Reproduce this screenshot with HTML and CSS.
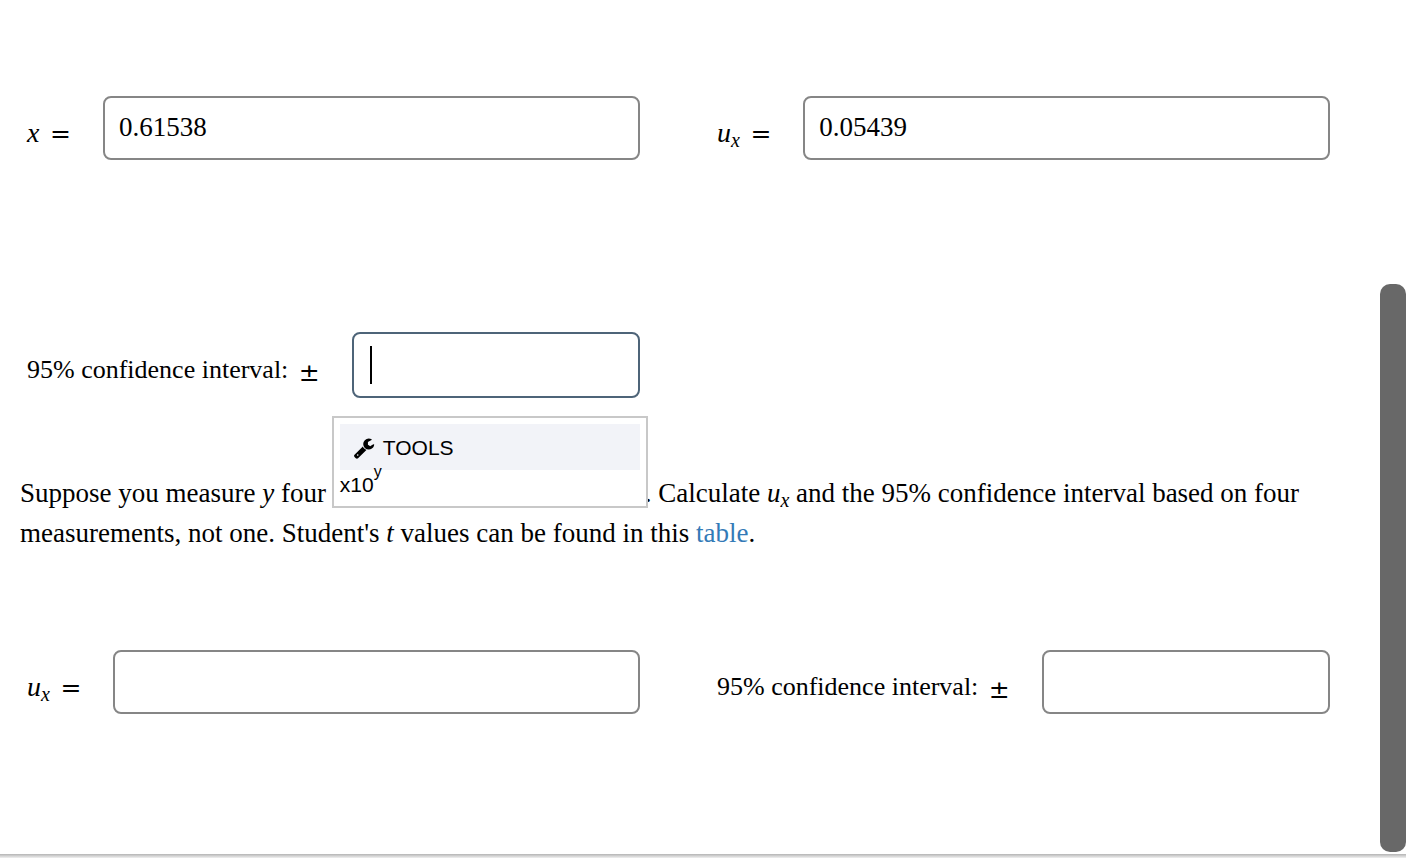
FILE: index.html
```
<!DOCTYPE html>
<html lang="en">
<head>
    <meta charset="utf-8">
    <title>Confidence Interval</title>
    <link rel="stylesheet" href="styles.css">
</head>
<body>
    <div class="viewer">
        <main class="question">
            <form>
                <div class="row">
                    <div class="field">
                        <label for="x"><i>x</i> <span class="op">=</span></label>
                        <div class="answer">
                            <input type="text" id="x" value="0.61538" autocomplete="off">
                        </div>
                    </div>
                    <div class="field">
                        <label for="ux"><i>u<sub>x</sub></i> <span class="op">=</span></label>
                        <div class="answer">
                            <input type="text" id="ux" value="0.05439" autocomplete="off">
                        </div>
                    </div>
                </div>

                <div class="row row-ci">
                    <div class="field">
                        <label for="ci">95% confidence interval: <span class="op pm">±</span></label>
                        <div class="answer">
                            <input type="text" id="ci" class="active" autocomplete="off">
                            <span class="caret"></span>
                            <div class="tools">
                                <button type="button" class="tools-title">
                                    <svg width="22" height="22" viewBox="0 0 1792 1792" aria-hidden="true">
                                        <path d="M448 1472q0-26-19-45t-45-19-45 19-19 45 19 45 45 19 45-19 19-45zm644-420l-682 682q-37 37-90 37-52 0-91-37l-106-108q-38-36-38-90 0-53 38-91l681-681q39 98 114.500 173.500t173.500 114.500zm634-435q0 39-23 106-47 134-164.500 217.500t-258.500 83.500q-185 0-316.500-131.500t-131.500-316.500 131.500-316.500 316.500-131.500q58 0 121.500 16.500t107.500 46.500q16 11 16 28t-16 28l-293 169v224l193 107q5-3 79-48.500t135.500-81 70.500-35.500q15 0 23.500 10t8.500 25z"/>
                                    </svg>
                                    TOOLS
                                </button>
                                <button type="button" class="tools-item">x10<sup>y</sup></button>
                            </div>
                        </div>
                    </div>
                </div>

                <p>Suppose you measure <i>y</i> four <span class="covered"></span>. Calculate <i>u<sub>x</sub></i> and the 95% confidence interval based on four measurements, not one. Student's <i>t</i> values can be found in this <a href="#">table</a>.</p>

                <div class="row">
                    <div class="field">
                        <label for="ux4"><i>u<sub>x</sub></i> <span class="op">=</span></label>
                        <div class="answer">
                            <input type="text" id="ux4" autocomplete="off">
                        </div>
                    </div>
                    <div class="field">
                        <label for="ci4">95% confidence interval: <span class="op pm">±</span></label>
                        <div class="answer">
                            <input type="text" id="ci4" autocomplete="off">
                        </div>
                    </div>
                </div>
            </form>
        </main>
        <div class="scrollbar"><div class="thumb"></div></div>
    </div>
    <div class="bottom-edge"></div>
</body>
</html>
```
FILE: styles.css
```
* {
    margin: 0;
    padding: 0;
    box-sizing: border-box;
}
body {
    display: flex;
    flex-direction: column;
    min-height: 100vh;
    background: white;
    color: black;
    font-family: "Liberation Serif", serif;
    font-size: 27px;
    line-height: 40px;
}
.viewer {
    display: flex;
    flex: 1;
}
.question {
    flex: 1;
    padding: 96px 50px 0 20px;
}
.row {
    display: grid;
    grid-template-columns: 1fr 1fr;
    column-gap: 77px;
    padding-left: 7px;
}
.row-ci {
    margin-top: 172px;
}
.field {
    display: flex;
    align-items: center;
    gap: 32px;
}
label {
    padding-top: 10px;
    font-size: 26px;
    white-space: nowrap;
}
label i {
    font-size: 28px;
}
sub {
    font-size: 20px;
    line-height: 0;
    vertical-align: -5px;
}
.op {
    margin-left: 4px;
    font-family: "DejaVu Sans", sans-serif;
    font-size: 25px;
    line-height: 0;
}
.pm {
    vertical-align: -3px;
}
.answer {
    position: relative;
    flex: 1;
}
input {
    display: block;
    width: 100%;
    height: 64px;
    padding: 0 14px 2px;
    border: 2px solid #868686;
    border-radius: 8px;
    background: white;
    color: black;
    font: inherit;
    outline: none;
}
input.active {
    height: 66px;
    border-color: #4e6478;
}
.caret {
    position: absolute;
    top: 14px;
    left: 18px;
    width: 2px;
    height: 38px;
    background: black;
}

/* equation tools menu under the active box */
.tools {
    position: absolute;
    top: 84px;
    left: -20px;
    right: -8px;
    height: 92px;
    padding: 6px;
    border: 2px solid #c8c8c8;
    background: white;
}
.tools button {
    display: block;
    border: none;
    background: none;
    color: black;
    font-family: "Liberation Sans", sans-serif;
    font-size: 21px;
    line-height: 30px;
}
.tools .tools-title {
    display: flex;
    align-items: center;
    gap: 8px;
    width: 100%;
    height: 46px;
    padding: 2px 13px 0;
    background: #f2f3f8;
}
.tools sup {
    font-size: 16px;
    line-height: 0;
    vertical-align: 15px;
}
p {
    margin: 75px 0 97px;
}
.covered {
    display: inline-block;
    width: 312px;
}
a {
    color: #337ab7;
    text-decoration: none;
}
.scrollbar {
    display: flex;
    width: 26px;
    padding: 284px 0 2px;
}
.thumb {
    flex: 1;
    border-radius: 10px;
    background: #686868;
}
.bottom-edge {
    height: 4px;
    background: linear-gradient(#b4b4b4, #f0f0f0);
}
```
